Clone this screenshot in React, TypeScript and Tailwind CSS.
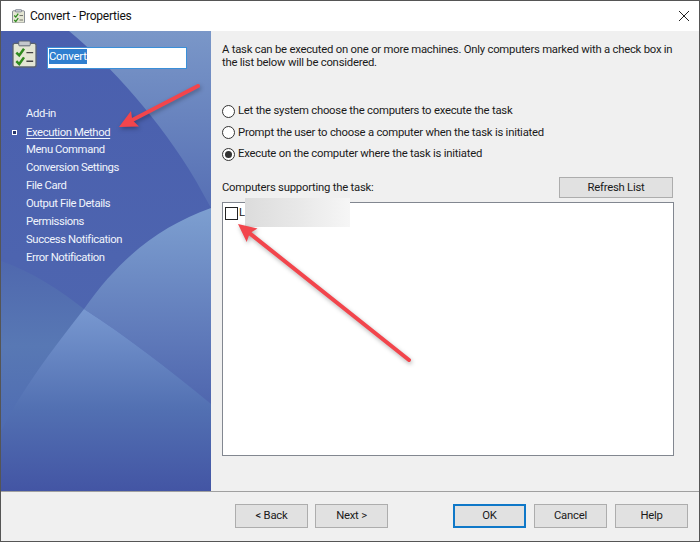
const navItems = [
  'Add-in',
  'Execution Method',
  'Menu Command',
  'Conversion Settings',
  'File Card',
  'Output File Details',
  'Permissions',
  'Success Notification',
  'Error Notification',
];

const radios = [
  { label: 'Let the system choose the computers to execute the task', checked: false },
  { label: 'Prompt the user to choose a computer when the task is initiated', checked: false },
  { label: 'Execute on the computer where the task is initiated', checked: true },
];

function TaskIcon({ size }: { size: number }) {
  return (
    <svg width={size} height={size * 1.12} viewBox="0 0 26 29" className="shrink-0">
      <rect x="1" y="3.5" width="24" height="24.5" rx="2" fill="#e4e6d4" stroke="#5a6270" strokeWidth="1.4" />
      <rect x="7" y="1" width="12" height="5" rx="1" fill="#c4c8cc" stroke="#5a6270" />
      <path d="M4.5 13l3 3 5-7" fill="none" stroke="#2f8a1e" strokeWidth="2.6" />
      <path d="M4.5 22l3 3 5-7" fill="none" stroke="#2f8a1e" strokeWidth="2.6" />
      <path d="M15 13h7M15 22h7" stroke="#444" strokeWidth="1.4" />
    </svg>
  );
}

function SidebarArt() {
  return (
    <svg viewBox="0 0 210 460" preserveAspectRatio="none" className="absolute inset-0 h-full w-full">
      <defs>
        <linearGradient id="base" x1="0" y1="0" x2="0" y2="1">
          <stop offset="0" stopColor="#4a5fae" />
          <stop offset="1" stopColor="#5069b0" />
        </linearGradient>
        <linearGradient id="left" x1="0" y1="0" x2="0" y2="1">
          <stop offset="0" stopColor="#4f68ae" />
          <stop offset="0.5" stopColor="#5878b4" />
          <stop offset="1" stopColor="#4f6cb2" />
        </linearGradient>
        <linearGradient id="top" x1="0" y1="0" x2="0" y2="1">
          <stop offset="0" stopColor="#7a97c8" />
          <stop offset="1" stopColor="#566fb4" />
        </linearGradient>
        <linearGradient id="right" x1="0" y1="0" x2="0" y2="1">
          <stop offset="0" stopColor="#7d9fd0" />
          <stop offset="1" stopColor="#4f66ae" />
        </linearGradient>
        <linearGradient id="bottom" x1="0" y1="0" x2="0" y2="1">
          <stop offset="0" stopColor="#7898d0" />
          <stop offset="0.55" stopColor="#5270b2" />
          <stop offset="1" stopColor="#4355a4" />
        </linearGradient>
      </defs>
      <rect width="210" height="460" fill="url(#base)" />
      <path d="M68 0C110 35 160 90 195 150L210 177V0Z" fill="url(#top)" />
      <path d="M0 230C30 240 60 260 83 278L0 400Z" fill="url(#left)" />
      <path d="M210 177C160 195 120 225 83 278C125 305 170 340 210 373Z" fill="url(#right)" />
      <path d="M83 278C125 305 170 340 210 373V460H0V400C20 360 50 320 83 278Z" fill="url(#bottom)" />
    </svg>
  );
}

function Arrow({ x1, y1, x2, y2 }: { x1: number; y1: number; x2: number; y2: number }) {
  const angle = Math.atan2(y2 - y1, x2 - x1);
  const len = 20;
  const wing = 0.45;
  const ax = x2 - len * Math.cos(angle - wing);
  const ay = y2 - len * Math.sin(angle - wing);
  const bx = x2 - len * Math.cos(angle + wing);
  const by = y2 - len * Math.sin(angle + wing);
  const neckX = x2 - len * 0.75 * Math.cos(angle);
  const neckY = y2 - len * 0.75 * Math.sin(angle);
  return (
    <g>
      <line x1={x1} y1={y1} x2={neckX} y2={neckY} stroke="#f2454c" strokeWidth="4" strokeLinecap="round" />
      <polygon points={`${x2},${y2} ${ax},${ay} ${neckX},${neckY} ${bx},${by}`} fill="#f2454c" />
    </g>
  );
}

function DialogButton({ label, primary, className = '' }: { label: string; primary?: boolean; className?: string }) {
  return (
    <button
      className={`h-6 w-[73px] bg-[#e1e1e1] pt-px text-[#1a1a1a] ${
        primary ? 'border-2 border-[#0f78c8]' : 'border border-[#adadad]'
      } ${className}`}
    >
      {label}
    </button>
  );
}

export default function App() {
  return (
    <div className='relative flex h-[542px] w-[700px] flex-col overflow-hidden border-x border-b border-[#555] bg-[#f0f0f0] font-["Roboto",sans-serif] text-[11.3px] tracking-[-0.23px] text-[#1a1a1a]'>
      {/* Title bar */}
      <div className="flex h-[31px] shrink-0 items-center border-t border-[#555] bg-white pl-[11px] pr-[9px]">
        <TaskIcon size={13} />
        <span className="ml-[5px] text-[12px] text-[#111]">Convert - Properties</span>
        <svg width="12" height="12" viewBox="0 0 12 12" className="ml-auto">
          <path d="M1 1l10 10M11 1L1 11" stroke="#222" strokeWidth="1" />
        </svg>
      </div>

      <div className="flex h-[461px] shrink-0 border-b border-[#a0a0a0]">
        {/* Sidebar */}
        <div className="relative w-[210px] shrink-0 text-[#f0f4fc]">
          <SidebarArt />
          <div className="relative flex flex-col pl-[11px]">
            <div className="flex items-start pt-[9px]">
              <TaskIcon size={25} />
              <div className="ml-[10px] mt-[7px] flex h-[22px] w-[140px] items-center border border-[#3a8fd8] bg-white pb-[3px] pl-[1px]">
                <span className="bg-[#2f7fd0] leading-[15px] text-white">Convert</span>
              </div>
            </div>
            <ul className="mt-[36px] flex flex-col tracking-[-0.4px]">
              {navItems.map((item, i) => (
                <li key={item} className="relative flex h-[18px] items-center pl-[14px]">
                  {i === 1 && (
                    <span className="absolute left-0 top-[7px] h-[5px] w-[5px] border border-white bg-[#26366e]" />
                  )}
                  <span className={i === 1 ? 'leading-[13px] underline underline-offset-2' : ''}>{item}</span>
                </li>
              ))}
            </ul>
          </div>
        </div>

        {/* Content */}
        <div className="flex min-w-0 flex-1 flex-col pl-[11px] pr-[25px] pt-[12px]">
          <p className="leading-[13px]">
            A task can be executed on one or more machines. Only computers marked with a check box in the list below will be considered.
          </p>
          <div className="mt-[35px] flex flex-col gap-[7.5px]">
            {radios.map((r) => (
              <label key={r.label} className="flex h-[14px] items-center gap-[3px]">
                <span className="flex h-[13px] w-[13px] shrink-0 items-center justify-center rounded-full border border-[#333] bg-white">
                  {r.checked && <span className="h-[7px] w-[7px] rounded-full bg-[#333]" />}
                </span>
                <span className="pt-px">{r.label}</span>
              </label>
            ))}
          </div>
          <div className="mt-[16px] flex h-[21px] items-center justify-between pr-px">
            <span className="pt-[2px]">Computers supporting the task:</span>
            <button className="h-[21px] w-[114px] border border-[#adadad] bg-[#e1e1e1] pt-[2px]">Refresh List</button>
          </div>
          <div className="relative mt-[4px] h-[254px] border border-[#828790] bg-white pl-[2px] pt-[2px]">
            <div className="flex items-center gap-[1px]">
              <span className="h-[13px] w-[13px] border border-[#222] bg-white" />
              <span>L</span>
            </div>
            <div className="absolute -top-[5px] left-[22px] h-[29px] w-[105px] bg-gradient-to-r from-[#dcdcdc] via-[#e8e8e8] to-[#f6f6f6]" />
          </div>
        </div>
      </div>

      {/* Footer */}
      <div className="flex flex-1 items-start pl-[234px] pr-[11px] pt-[12px]">
        <DialogButton label="< Back" />
        <DialogButton label="Next >" className="ml-[7px]" />
        <DialogButton label="OK" primary className="ml-[65px]" />
        <DialogButton label="Cancel" className="ml-[8px]" />
        <DialogButton label="Help" className="ml-[8px]" />
      </div>

      {/* Annotation arrows */}
      <svg width="700" height="542" className="pointer-events-none absolute -left-px top-0 drop-shadow-[1px_2px_2px_rgba(0,0,0,0.3)]">
        <Arrow x1={198} y1={86} x2={119} y2={127} />
        <Arrow x1={409} y1={360} x2={238} y2={224} />
      </svg>
    </div>
  );
}
